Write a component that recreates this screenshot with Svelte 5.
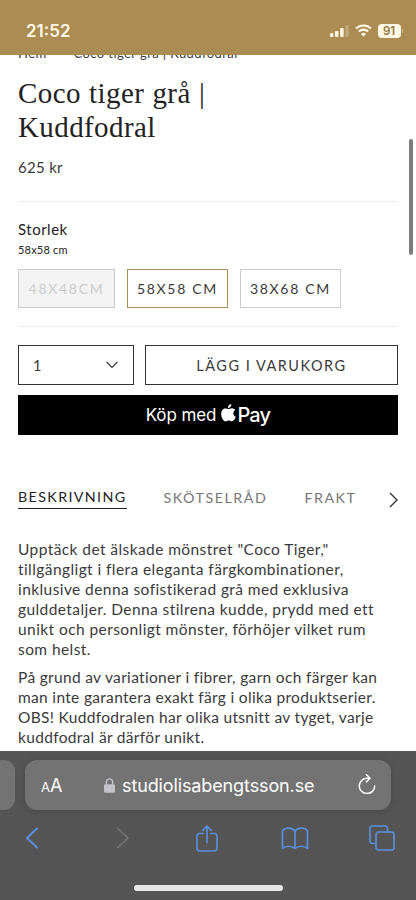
<script lang="ts">
  const sizes = [
    { label: "48X48CM", soldOut: true },
    { label: "58X58 CM", soldOut: false },
    { label: "38X68 CM", soldOut: false },
  ];
  const tabs = ["Beskrivning", "Skötselråd", "Frakt"];
  let selected = $state("58X58 CM");
  let activeTab = $state("Beskrivning");
</script>

<div class="phone">
  <header class="status">
    <span class="time">21:52</span>
    <div class="indicators">
      <svg class="signal" width="19" height="12" viewBox="0 0 19 12" fill="#fff9e8">
        <rect x="0" y="8" width="3.4" height="4" rx="1" />
        <rect x="5" y="6" width="3.4" height="6" rx="1" />
        <rect x="10.2" y="3" width="3.4" height="9" rx="1" />
        <rect x="15.4" y="0" width="3.4" height="12" rx="1" opacity="0.25" />
      </svg>
      <svg class="wifi" width="17" height="13" viewBox="0 0 17 13" fill="none" stroke="#fff9e8" stroke-width="2.1">
        <path d="M1 4.6a10.7 10.7 0 0 1 15 0" />
        <path d="M3.8 7.6a6.7 6.7 0 0 1 9.4 0" />
        <path d="M8.5 12.5 6 9.9a3.6 3.6 0 0 1 5 0z" fill="#fff9e8" stroke="none" />
      </svg>
      <span class="battery">91</span>
      <span class="battery-tip"></span>
    </div>
  </header>

  <main class="product">
    <nav class="crumbs"><span>Hem</span><span>Coco tiger grå | Kuddfodral</span></nav>
    <h1>Coco tiger grå |<br />Kuddfodral</h1>
    <p class="price">625 kr</p>

    <section class="size">
      <h2>Storlek</h2>
      <p class="chosen">58x58 cm</p>
      <div class="options">
        {#each sizes as size}
          <button
            class="option"
            class:selected={selected === size.label}
            disabled={size.soldOut}
            onclick={() => (selected = size.label)}>{size.label}</button
          >
        {/each}
      </div>
    </section>

    <section class="buy">
      <div class="cart-row">
        <button class="qty">
          <span>1</span>
          <svg width="12" height="8" viewBox="0 0 12 8" fill="none" stroke="#333" stroke-width="1.1">
            <path d="M.6 1 6 6.4 11.4 1" />
          </svg>
        </button>
        <button class="add">LÄGG I VARUKORG</button>
      </div>
      <button class="apple-pay">
        <span class="buy-with">Köp med</span>
        <svg width="15" height="18" viewBox="0 0 15 18" fill="#fff">
          <path d="M10.4 0c.2 2.1-1.5 4-3.4 4C6.8 2 8.5.3 10.4 0z" />
          <path
            d="M7.5 5.1c.9 0 1.8-.8 3.5-.8 1.3 0 2.5.7 3.2 1.8-2.8 1.7-2.3 5.5.6 6.7-.7 2-2.2 4.5-3.9 4.5-1.3 0-1.7-.8-3.2-.8s-2 .8-3.2.8C2.5 17.3.2 13.4.2 9.9c0-3.5 2-5.5 4.2-5.5 1.3 0 2.2.7 3.1.7z"
          />
        </svg>
        <span class="pay">Pay</span>
      </button>
    </section>

    <div class="tabs">
      {#each tabs as tab}
        <button class="tab" class:active={activeTab === tab} onclick={() => (activeTab = tab)}>{tab}</button>
      {/each}
      <svg class="more" width="9" height="16" viewBox="0 0 9 16" fill="none" stroke="#333" stroke-width="1.4">
        <path d="M1 1l7 7-7 7" />
      </svg>
    </div>

    <div class="description">
      <p>
        Upptäck det älskade mönstret "Coco Tiger,"<br />
        tillgängligt i flera eleganta färgkombinationer,<br />
        inklusive denna sofistikerad grå med exklusiva<br />
        gulddetaljer. Denna stilrena kudde, prydd med ett<br />
        unikt och personligt mönster, förhöjer vilket rum<br />
        som helst.
      </p>
      <p>
        På grund av variationer i fibrer, garn och färger kan<br />
        man inte garantera exakt färg i olika produktserier.<br />
        OBS! Kuddfodralen har olika utsnitt av tyget, varje<br />
        kuddfodral är därför unikt.
      </p>
    </div>
  </main>

  <footer class="browser">
    <div class="address-row">
      <div class="prev-tab"></div>
      <div class="address">
        <span class="aa"><small>A</small>A</span>
        <div class="url">
          <svg width="11" height="15" viewBox="0 0 11 15">
            <rect x="0" y="6.2" width="11" height="8.6" rx="1.4" fill="#c4c3c9" />
            <path d="M2.4 6.5V4a3.1 3.1 0 0 1 6.2 0v2.5" fill="none" stroke="#c4c3c9" stroke-width="1.4" />
          </svg>
          <span>studiolisabengtsson.se</span>
        </div>
        <svg class="reload" width="18" height="20" viewBox="0 0 18 20" fill="none" stroke="#fff" stroke-width="1.5" stroke-linecap="round" stroke-linejoin="round">
          <path d="M11.5 4.2H9A7.7 7.7 0 1 0 16.7 12" />
          <path d="M8.5.8 12 4.2 8.5 7.7" />
        </svg>
      </div>
    </div>

    <div class="toolbar">
      <svg height="22" viewBox="0 0 13 22"><path class="back" d="M11.5 1.5 1.5 11l10 9.5" /></svg>
      <svg class="off" height="22" viewBox="0 0 13 22"><path d="m1.5 1.5 10 9.5-10 9.5" /></svg>
      <svg height="27" viewBox="0 0 22 27">
        <path d="M7 8.5H3.5A2.5 2.5 0 0 0 1 11v12.5A2.5 2.5 0 0 0 3.5 26h15a2.5 2.5 0 0 0 2.5-2.5V11a2.5 2.5 0 0 0-2.5-2.5H15" />
        <path d="M11 17.5V1.2M6.8 5.3 11 1.2l4.2 4.1" />
      </svg>
      <svg height="23" viewBox="0 0 27 23">
        <path d="M13.5 4.2C11 .2 3.5.2 1 4v17.5c2.8-3 9.5-3 12.500 0 3-3 9.700-3 12.500 0V4C23.500.2 16 .2 13.500 4.200zV21.500" />
      </svg>
      <svg height="26" viewBox="0 0 26 26">
        <path d="M7 18.5H3.5A2.5 2.5 0 0 1 1 16V3.5A2.5 2.5 0 0 1 3.5 1H16a2.5 2.5 0 0 1 2.5 2.5V7" />
        <rect x="7" y="7" width="18" height="18" rx="2.5" />
      </svg>
    </div>
    <div class="home-bar"></div>
  </footer>

  <div class="scrollbar"></div>
</div>

<style>
  :global(body) {
    background: #fff;
  }
  * {
    box-sizing: border-box;
  }
  button {
    font: inherit;
    color: inherit;
    border-radius: 0;
    padding: 0;
    background: none;
  }
  h1,
  h2,
  p {
    margin: 0;
    font-weight: 400;
  }
  .phone {
    position: relative;
    display: flex;
    flex-direction: column;
    width: 416px;
    height: 900px;
    overflow: hidden;
    background: #fff;
    color: #3a3a3a;
    font-family: Lato, sans-serif;
  }

  /* status bar */
  .status {
    display: flex;
    flex: none;
    align-items: center;
    justify-content: space-between;
    height: 55px;
    padding: 6px 13px 0 26px;
    background: #ab8c52;
    color: #fff9e8;
    font-family: Inter, sans-serif;
  }
  .time {
    font-size: 17px;
    font-weight: 600;
  }
  .indicators {
    display: flex;
    align-items: center;
  }
  .wifi {
    margin: 0 6px 0 6px;
  }
  .battery {
    width: 23px;
    height: 14px;
    border-radius: 4px;
    background: #fff9e8;
    color: #94773f;
    font-size: 11.5px;
    font-weight: 600;
    line-height: 14px;
    text-align: center;
  }
  .battery-tip {
    width: 1.5px;
    height: 4px;
    margin-left: 1px;
    border-radius: 0 2px 2px 0;
    background: #cfb98e;
  }

  /* product */
  .product {
    flex: none;
    height: 696px;
    padding: 0 18px;
    overflow: hidden;
  }
  .crumbs {
    display: flex;
    gap: 27px;
    height: 20px;
    margin-top: -12px;
    font-size: 13px;
    line-height: 20px;
    letter-spacing: 0.42px;
  }
  h1 {
    margin-top: 13px;
    color: #222;
    font-family: "Liberation Serif", serif;
    font-size: 29px;
    line-height: 34px;
    letter-spacing: 0.4px;
    word-spacing: 0.6px;
  }
  .price {
    height: 45px;
    margin-top: 13px;
    border-bottom: 1px solid #eee;
    font-size: 15px;
    line-height: 20px;
    letter-spacing: 0.3px;
  }
  .size {
    height: 125px;
    padding-top: 17px;
    border-bottom: 1px solid #eee;
  }
  h2 {
    color: #222;
    font-size: 15px;
    line-height: 20px;
    letter-spacing: 0.5px;
  }
  .chosen {
    margin-top: 3px;
    color: #222;
    font-size: 11px;
    line-height: 16px;
    letter-spacing: 0.2px;
  }
  .options {
    display: flex;
    gap: 12px;
    margin-top: 11px;
  }
  .option {
    width: 101px;
    height: 39px;
    border: 1px solid #ccc;
    font-size: 14px;
    letter-spacing: 1.7px;
    white-space: nowrap;
  }
  .option:disabled {
    width: 97px;
    background: #f3f3f3;
    color: #ccc;
  }
  .option.selected {
    border-color: #ab8c52;
  }
  .buy {
    padding-top: 18px;
  }
  .cart-row {
    display: flex;
    gap: 11px;
    margin-bottom: 10px;
  }
  .qty,
  .add {
    height: 40px;
    border: 1px solid #333;
    font-size: 14.5px;
  }
  .qty {
    display: flex;
    align-items: center;
    justify-content: space-between;
    width: 116px;
    padding: 0 15px 0 14px;
  }
  .add {
    flex: 1;
    letter-spacing: 1.5px;
  }
  .apple-pay {
    display: flex;
    align-items: center;
    justify-content: center;
    width: 100%;
    height: 40px;
    border: 0;
    background: #000;
    color: #fff;
    font-family: Inter, sans-serif;
  }
  .buy-with {
    margin-right: 5px;
    font-size: 17px;
    letter-spacing: -0.1px;
  }
  .pay {
    margin-left: 1px;
    font-size: 20px;
    font-weight: 500;
    letter-spacing: -0.8px;
  }
  .apple-pay svg {
    margin-bottom: 4px;
  }
  .tabs {
    display: flex;
    align-items: flex-start;
    height: 54px;
    margin-top: 50px;
  }
  .tab {
    height: 24px;
    margin-right: 37px;
    border: 0;
    color: #777;
    font-size: 14.3px;
    line-height: 23px;
    letter-spacing: 1.5px;
    text-transform: uppercase;
  }
  .tab.active {
    border-bottom: 1px solid #222;
    color: #222;
    letter-spacing: 1.35px;
  }
  .tab:last-of-type {
    margin-right: 0;
  }
  .more {
    flex: none;
    margin: 7px 0 0 auto;
  }
  .description {
    font-size: 15.5px;
    line-height: 20px;
    letter-spacing: 0.42px;
    white-space: nowrap;
  }
  .description p + p {
    margin-top: 8px;
    letter-spacing: 0.32px;
  }

  /* browser chrome */
  .browser {
    flex: 1;
    background: #555;
  }
  .address-row {
    display: flex;
    gap: 10px;
    padding-top: 9px;
  }
  .prev-tab {
    width: 15px;
    height: 50px;
    border-radius: 0 11px 11px 0;
    background: #737373;
  }
  .address {
    display: flex;
    align-items: center;
    width: 366px;
    height: 50px;
    padding: 0 15px 0 16px;
    border-radius: 12px;
    background: #737373;
    box-shadow: 0 1px 8px rgba(0, 0, 0, 0.15);
    color: #fff;
    font-family: Inter, sans-serif;
  }
  .aa {
    width: 63px;
    font-size: 18px;
  }
  .aa small {
    font-size: 13px;
  }
  .url {
    display: flex;
    align-items: center;
    gap: 7px;
    font-size: 18px;
    letter-spacing: -0.12px;
  }
  .reload {
    flex: none;
    margin-left: auto;
    margin-bottom: 3px;
  }
  .toolbar {
    display: flex;
    align-items: center;
    justify-content: space-between;
    height: 56px;
    padding: 0 20px 0 18px;
  }
  .toolbar svg {
    width: 28px;
    fill: none;
    stroke: #5b8edb;
    stroke-width: 1.7;
    stroke-linecap: round;
    stroke-linejoin: round;
  }
  .toolbar .back {
    stroke-width: 2;
  }
  .toolbar .off {
    margin: 0 -3px 0 3px;
    stroke: #757575;
  }
  .home-bar {
    width: 149px;
    height: 6px;
    margin: 19px auto 0;
    border-radius: 3px;
    background: #e8e8ea;
  }
  /* overlay scroll indicator */
  .scrollbar {
    position: absolute;
    top: 139px;
    right: 3px;
    width: 4px;
    height: 116px;
    border-radius: 2px;
    background: #7c7c7c;
  }
</style>
